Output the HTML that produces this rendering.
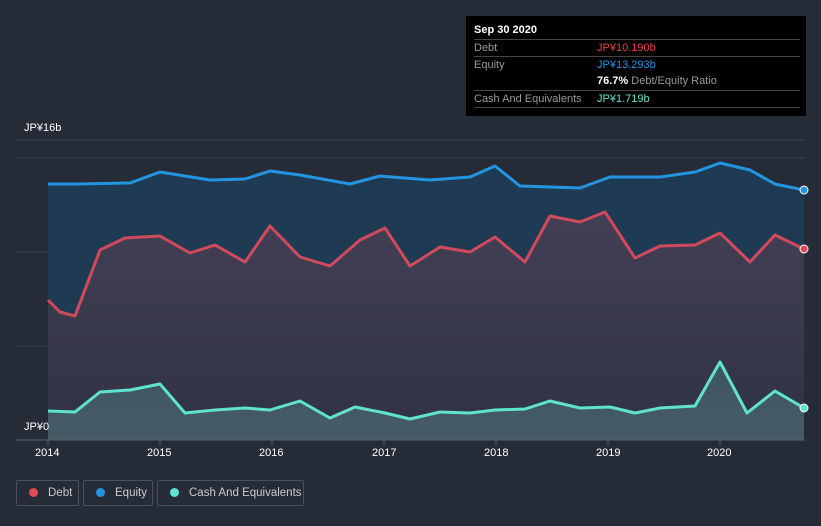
<!DOCTYPE html><html><head><style>
body{margin:0;background:#252c37;font-family:"Liberation Sans",sans-serif;width:821px;height:526px;overflow:hidden;position:relative}
.t{position:absolute;color:#fff;font-size:11px}
.tip{position:absolute;left:466px;top:16px;width:340px;height:100px;background:#000}
.tip div{position:absolute;font-size:11px;white-space:nowrap}
.ln{position:absolute;left:8px;width:326px;height:1px;background:#444}
.leg{position:absolute;top:480px;height:26px;border:1px solid #4a515c;border-radius:2px;color:#c8ccd2;font-size:11.5px;line-height:24px;box-sizing:border-box;white-space:nowrap;overflow:hidden}
.leg i{display:inline-block;width:9px;height:9px;border-radius:50%;margin:0 10px 0 12px;vertical-align:-1px}
</style></head><body>
<svg width="821" height="526" style="position:absolute;left:0;top:0">
<defs><linearGradient id="g" x1="0" y1="0" x2="0" y2="1"><stop offset="0" stop-color="#3d5562"/><stop offset="1" stop-color="#465b66"/></linearGradient>
<linearGradient id="d" x1="0" y1="0" x2="0" y2="1"><stop offset="0" stop-color="#433f55"/><stop offset="1" stop-color="#2f3342"/></linearGradient></defs>
<line x1="16" y1="140" x2="805" y2="140" stroke="#3a414b"/>
<line x1="16" y1="158" x2="805" y2="158" stroke="#3a414b"/>
<line x1="16" y1="252" x2="805" y2="252" stroke="#3a414b"/>
<line x1="16" y1="346" x2="805" y2="346" stroke="#3a414b"/>
<polygon fill="#1e3b53" points="48,184 80,184 130,183 160,172 210,180 245,179 270,171 300,175 350,184 380,176 430,180 470,177 495,166 520,186 580,188 610,177 660,177 695,172 720,163 750,170 775,184 804,190 804,440 48,440"/>
<polygon fill="url(#d)" points="48,300 60,312 75,316 100,250 125,238 160,236 190,253 215,245 245,262 270,226 300,257 330,266 360,240 385,228 410,266 440,247 470,252 495,237 525,262 550,216 580,222 605,212 635,258 660,246 695,245 720,233 750,262 775,235 804,249 804,440 48,440"/>
<polygon fill="url(#g)" points="48,411 75,412 100,392 130,390 160,384 185,413 215,410 245,408 270,410 300,401 330,418 355,407 385,413 410,419 440,412 470,413 495,410 525,409 550,401 580,408 610,407 635,413 660,408 695,406 720,362 747,413 775,391 804,408 804,440 48,440"/>
<g fill="none" stroke-width="3" stroke-linejoin="round">
<polyline stroke="#2394e0" points="48,184 80,184 130,183 160,172 210,180 245,179 270,171 300,175 350,184 380,176 430,180 470,177 495,166 520,186 580,188 610,177 660,177 695,172 720,163 750,170 775,184 804,190"/>
<polyline stroke="#d04a5c" points="48,300 60,312 75,316 100,250 125,238 160,236 190,253 215,245 245,262 270,226 300,257 330,266 360,240 385,228 410,266 440,247 470,252 495,237 525,262 550,216 580,222 605,212 635,258 660,246 695,245 720,233 750,262 775,235 804,249"/>
<polyline stroke="#5fe3cf" points="48,411 75,412 100,392 130,390 160,384 185,413 215,410 245,408 270,410 300,401 330,418 355,407 385,413 410,419 440,412 470,413 495,410 525,409 550,401 580,408 610,407 635,413 660,408 695,406 720,362 747,413 775,391 804,408"/>
</g>
<circle cx="804" cy="190" r="4" fill="#2394e0" stroke="#fff"/>
<circle cx="804" cy="249" r="4" fill="#e04a55" stroke="#fff"/>
<circle cx="804" cy="408" r="4" fill="#5fe3cf" stroke="#fff"/>
<line x1="16" y1="440" x2="805" y2="440" stroke="#5a616b"/>
<g stroke="#5a616b"><line x1="48" y1="440" x2="48" y2="445"/><line x1="160" y1="440" x2="160" y2="445"/><line x1="272" y1="440" x2="272" y2="445"/><line x1="384" y1="440" x2="384" y2="445"/><line x1="496" y1="440" x2="496" y2="445"/><line x1="608" y1="440" x2="608" y2="445"/><line x1="720" y1="440" x2="720" y2="445"/></g>
</svg>
<div class="t" style="left:24px;top:122px">JP¥16b</div>
<div class="t" style="left:24px;top:421px">JP¥0</div>
<div class="t" style="left:35px;top:447px">2014</div>
<div class="t" style="left:147px;top:447px">2015</div>
<div class="t" style="left:259px;top:447px">2016</div>
<div class="t" style="left:372px;top:447px">2017</div>
<div class="t" style="left:484px;top:447px">2018</div>
<div class="t" style="left:596px;top:447px">2019</div>
<div class="t" style="left:707px;top:447px">2020</div>
<div class="tip">
<div style="left:8px;top:8px;color:#fff;font-weight:bold">Sep 30 2020</div>
<div class="ln" style="top:23px"></div>
<div style="left:8px;top:26px;color:#999">Debt</div><div style="left:131px;top:26px;color:#e8404a">JP¥10.190b</div>
<div class="ln" style="top:40px"></div>
<div style="left:8px;top:43px;color:#999">Equity</div><div style="left:131px;top:43px;color:#2394e0">JP¥13.293b</div>
<div style="left:131px;top:59px;color:#fff"><b>76.7%</b> <span style="color:#999">Debt/Equity Ratio</span></div>
<div class="ln" style="top:74px"></div>
<div style="left:8px;top:77px;color:#999">Cash And Equivalents</div><div style="left:131px;top:77px;color:#5fe3cf">JP¥1.719b</div>
<div class="ln" style="top:91px"></div>
</div>
<div class="leg" style="left:16px;width:63px"><i style="background:#e04a55"></i>Debt</div>
<div class="leg" style="left:83px;width:70px"><i style="background:#2394e0"></i>Equity</div>
<div class="leg" style="left:157px;width:147px"><i style="background:#5fe3cf"></i>Cash And Equivalents</div>
</body></html>
